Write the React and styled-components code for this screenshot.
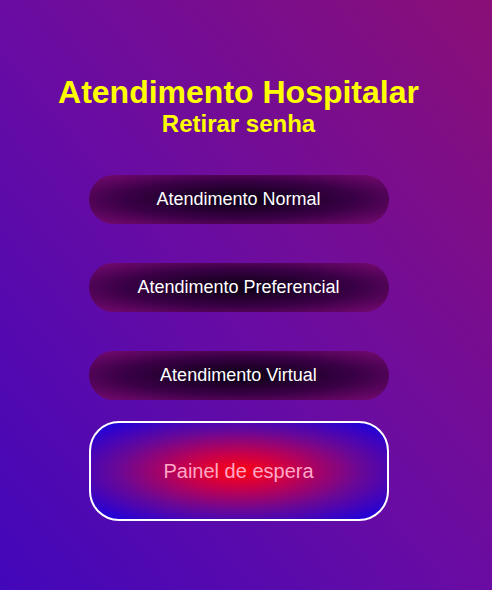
import React from "react";
import styled, { createGlobalStyle } from "styled-components";

const GlobalStyle = createGlobalStyle`
  html, body {
    margin: 0;
    padding: 0;
  }
  body {
    min-height: 590px;
    background: linear-gradient(to top right, #4207ba, #6a0ca2 50%, #8a0f76);
    font-family: "Liberation Sans", Arial, sans-serif;
  }
`;

const Main = styled.main`
  display: flex;
  flex-direction: column;
  align-items: center;
  padding: 75px 15px 0 0;
`;

const Title = styled.h1`
  margin: 0;
  color: #ffff00;
  font-size: 32px;
  font-weight: bold;
  line-height: 34px;
`;

const Subtitle = styled.h2`
  margin: 0 0 36px;
  color: #ffff00;
  font-size: 24px;
  font-weight: bold;
  line-height: 30px;
`;

const Menu = styled.nav`
  display: flex;
  flex-direction: column;
  align-items: center;
`;

const Button = styled.button`
  width: 300px;
  height: 49px;
  margin-bottom: 39px;
  border: none;
  border-radius: 25px;
  background: radial-gradient(ellipse at center, #12001c 10%, #3a0046 55%, #7a0a74 100%);
  color: #ffffff;
  font-family: "Liberation Sans", Arial, sans-serif;
  font-size: 18px;
  cursor: pointer;

  &:nth-of-type(3) {
    margin-bottom: 21px;
  }
`;

const PanelButton = styled.button`
  width: 300px;
  height: 100px;
  border: 2px solid #ffffff;
  border-radius: 30px;
  background: radial-gradient(ellipse at center, #ff0010 0%, #c8004a 25%, #6a0896 58%, #1000e8 100%);
  color: #ffa8c8;
  font-family: "Liberation Sans", Arial, sans-serif;
  font-size: 20px;
  cursor: pointer;
`;

export default function App() {
  return (
    <>
      <GlobalStyle />
      <Main>
        <Title>Atendimento Hospitalar</Title>
        <Subtitle>Retirar senha</Subtitle>
        <Menu>
          <Button>Atendimento Normal</Button>
          <Button>Atendimento Preferencial</Button>
          <Button>Atendimento Virtual</Button>
          <PanelButton>Painel de espera</PanelButton>
        </Menu>
      </Main>
    </>
  );
}
